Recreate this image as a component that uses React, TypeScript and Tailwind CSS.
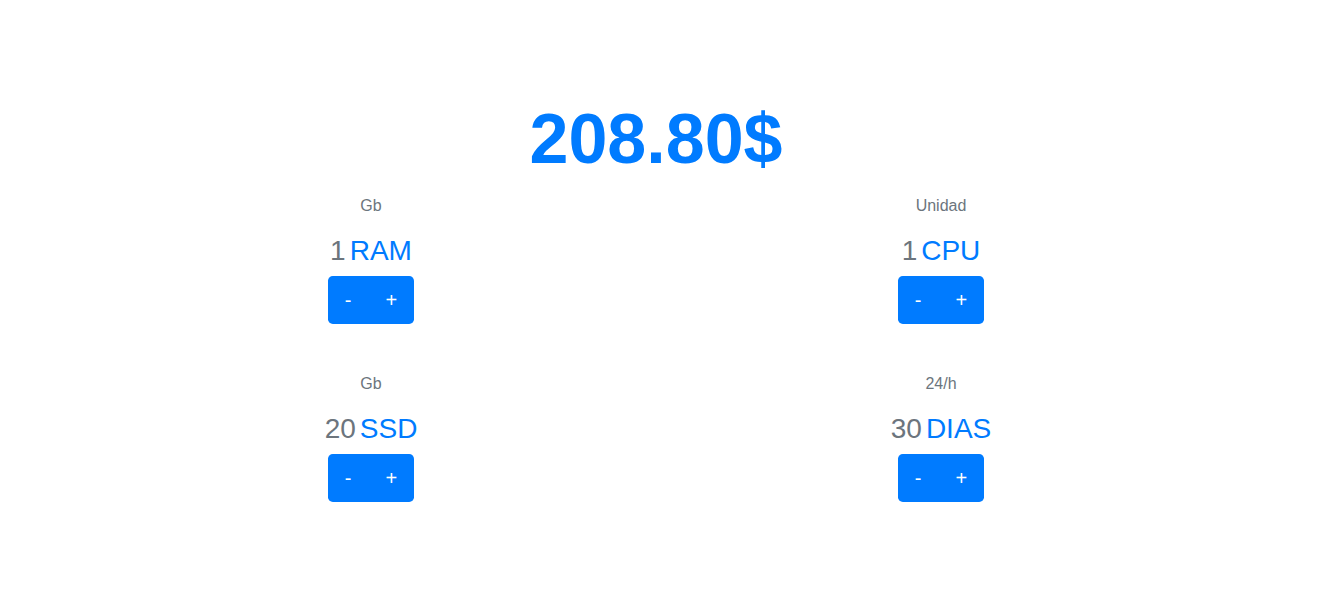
import { useState } from 'react';

type Item = { key: string; unit: string; name: string; start: number };

const items: Item[] = [
    { key: 'ram', unit: 'Gb', name: 'RAM', start: 1 },
    { key: 'cpu', unit: 'Unidad', name: 'CPU', start: 1 },
    { key: 'ssd', unit: 'Gb', name: 'SSD', start: 20 },
    { key: 'days', unit: '24/h', name: 'DIAS', start: 30 },
];

function Counter({ item }: { item: Item }) {
    const [value, setValue] = useState(item.start);
    return (
        <div className="flex flex-col items-center">
            <p className="text-base leading-6 text-[#6c757d]">{item.unit}</p>
            <p className="mt-[16px] text-[28px] leading-[34px]">
                <span className="text-[#6c757d]">{value}</span>
                <span className="ml-1 text-[#007bff]">{item.name}</span>
            </p>
            <div className="mt-[8px] flex rounded-[4.8px] overflow-hidden bg-[#007bff] text-white text-xl leading-[1.5]">
                <button
                    className="h-[48px] px-[17px] cursor-pointer"
                    onClick={() => setValue((v) => Math.max(0, v - 1))}
                >
                    -
                </button>
                <button className="h-[48px] px-[17px] cursor-pointer" onClick={() => setValue((v) => v + 1)}>
                    +
                </button>
            </div>
        </div>
    );
}

export default function App() {
    return (
        <div className="min-h-[602px] bg-white font-['Liberation_Sans',Arial,sans-serif]">
            <div className="ml-[86px] w-[1140px] pt-[97px]">
                <h1 className="text-center text-[70px] leading-[1.2] font-bold text-[#007bff]">208.80$</h1>
                <div className="mt-[13px] grid grid-cols-2 gap-y-[48px]">
                    {items.map((item) => (
                        <Counter key={item.key} item={item} />
                    ))}
                </div>
            </div>
        </div>
    );
}
